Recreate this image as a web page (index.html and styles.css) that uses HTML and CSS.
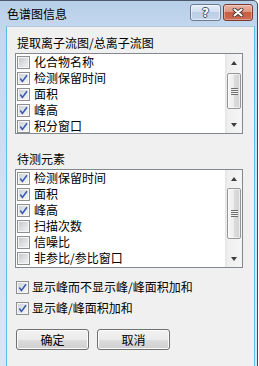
FILE: index.html
```html
<!DOCTYPE html>
<html>
<head>
    <meta charset="UTF-8">
    <meta name="viewport" content="width=device-width, initial-scale=1.0">
    <title>色谱图信息</title>
    <link rel="stylesheet" href="styles.css">
</head>
<body>
    <div class="window">
        <div class="titlebar">
            <span class="title">色谱图信息</span>
            <div class="caption-buttons">
                <span class="cap-btn help-btn"><span class="help-mark">?</span></span>
                <span class="cap-btn close-btn">
                    <svg width="12" height="9" viewBox="0 0 12 9">
                        <path d="M2.5 1.5 L9.5 7.5 M9.5 1.5 L2.5 7.5" stroke="#4a3430" stroke-width="3.8" stroke-linecap="round"/>
                        <path d="M2.5 1.5 L9.5 7.5 M9.5 1.5 L2.5 7.5" stroke="#ffffff" stroke-width="2.1" stroke-linecap="round"/>
                    </svg>
                </span>
            </div>
        </div>

        <div class="client">
            <div class="group-label">提取离子流图/总离子流图</div>
            <div class="listbox list-ion">
                <div class="list-items">
                    <div class="item"><span class="check"></span>化合物名称</div>
                    <div class="item"><span class="check checked"></span>检测保留时间</div>
                    <div class="item"><span class="check checked"></span>面积</div>
                    <div class="item"><span class="check checked"></span>峰高</div>
                    <div class="item"><span class="check checked"></span>积分窗口</div>
                </div>
                <div class="scrollbar">
                    <div class="sb-btn"><span class="arrow-up"></span></div>
                    <div class="sb-track">
                        <div class="sb-thumb" style="margin-top: 2px; height: 36px;"><span class="grip"></span></div>
                    </div>
                    <div class="sb-btn"><span class="arrow-down"></span></div>
                </div>
            </div>

            <div class="group-label second">待测元素</div>
            <div class="listbox list-elem">
                <div class="list-items">
                    <div class="item"><span class="check checked"></span>检测保留时间</div>
                    <div class="item"><span class="check checked"></span>面积</div>
                    <div class="item"><span class="check checked"></span>峰高</div>
                    <div class="item"><span class="check"></span>扫描次数</div>
                    <div class="item"><span class="check"></span>信噪比</div>
                    <div class="item"><span class="check"></span>非参比/参比窗口</div>
                </div>
                <div class="scrollbar">
                    <div class="sb-btn"><span class="arrow-up"></span></div>
                    <div class="sb-track">
                        <div class="sb-thumb" style="margin-top: 1px; height: 51px;"><span class="grip"></span></div>
                    </div>
                    <div class="sb-btn"><span class="arrow-down"></span></div>
                </div>
            </div>

            <label class="option first"><span class="check checked"></span>显示峰而不显示峰/峰面积加和</label>
            <label class="option"><span class="check checked"></span>显示峰/峰面积加和</label>

            <div class="button-row">
                <button class="push-btn">确定</button>
                <button class="push-btn">取消</button>
            </div>
        </div>
    </div>
</body>
</html>
```

FILE: styles.css
```css
body {
    margin: 0;
    background-color: #fff;
    font-family: "Noto Sans CJK SC", "Liberation Sans", sans-serif;
    font-size: 12px;
    color: #000;
}

/* Outer frame (aero glass) */
.window {
    width: 257px;
    padding-bottom: 1px;
    border-top: 1px solid #4f5866;
    border-right: 1px solid #3e4a5a;
    border-bottom: 1px solid #3e4a5a;
    border-top-right-radius: 5px;
    background: linear-gradient(to bottom, #b8cfe9 0px, #c4d7ee 30px, #d3e1f1 200px, #dae5f2 100%);
}

.titlebar {
    height: 25px;
    display: flex;
    justify-content: space-between;
    align-items: flex-start;
    padding: 0 4px 0 7px;
}

.title {
    line-height: 25px;
}

.caption-buttons {
    display: flex;
    gap: 2px;
    margin-top: 3px;
}

.cap-btn {
    height: 17px;
    box-sizing: border-box;
    border-radius: 3px;
    display: flex;
    justify-content: center;
    align-items: center;
}

.help-btn {
    width: 31px;
    border: 1px solid #6b7c92;
    background: linear-gradient(to bottom, #e6eef8 0%, #d3dff0 45%, #bccee5 50%, #c6d6ea 100%);
    box-shadow: inset 0 0 0 1px rgba(255,255,255,0.5);
}

.help-mark {
    font-family: "DejaVu Sans", sans-serif;
    font-weight: bold;
    font-size: 12px;
    line-height: 12px;
    color: #fff;
    text-shadow: 1px 0 #42526a, -1px 0 #42526a, 0 1px #42526a, 0 -1px #42526a;
}

.close-btn {
    width: 30px;
    border: 1px solid #7a3a30;
    background: linear-gradient(to bottom, #e9b3a5 0%, #dc9784 45%, #c85c45 50%, #cf6c52 100%);
    box-shadow: inset 0 0 0 1px rgba(255,255,255,0.35);
}

/* Client area of the dialog */
.client {
    margin: 0 2px 0 6px;
    height: 335px;
    border: 1px solid #58bde8;
    border-top-color: #b3c6dc;
    background-color: #f0f0f0;
    padding: 8px 11px 0 8px;
}

.group-label {
    line-height: 16px;
    padding-left: 2px;
    margin-bottom: 2px;
}

.group-label.second {
    margin-top: 17px;
}

.listbox {
    box-sizing: border-box;
    border: 1px solid #828790;
    background-color: #fff;
    display: flex;
    overflow: hidden;
}

.list-ion {
    height: 81px;
}

.list-elem {
    height: 99px;
}

.list-items {
    flex: 1;
    overflow: hidden;
}

.item {
    height: 16px;
    line-height: 16px;
    display: flex;
    align-items: center;
    padding-left: 1px;
    white-space: nowrap;
}

.item .check {
    margin-right: 4px;
}

/* Win7 style checkbox */
.check {
    width: 13px;
    height: 13px;
    flex: none;
    box-sizing: border-box;
    border: 1px solid #8e8f8f;
    background: linear-gradient(135deg, #bfc3c8 0%, #dcdee1 50%, #f3f3f3 100%);
    box-shadow: inset 0 0 0 1px #f6f6f6;
    position: relative;
}

.check.checked {
    background: linear-gradient(135deg, #c9ccd1 0%, #e4e6e9 50%, #f7f7f7 100%);
}

.check.checked::after {
    content: "";
    position: absolute;
    left: 1px;
    top: 1px;
    width: 9px;
    height: 9px;
    background: url("data:image/svg+xml,%3Csvg xmlns='http://www.w3.org/2000/svg' width='9' height='9' viewBox='0 0 9 9'%3E%3Cpath d='M1.3 4.6 L3.4 7.4 L8 1.3' fill='none' stroke='%233a5bb0' stroke-width='1.6'/%3E%3C/svg%3E") no-repeat;
}

/* Scrollbar */
.scrollbar {
    width: 17px;
    flex: none;
    display: flex;
    flex-direction: column;
    background: linear-gradient(to right, #e4e4e4 0px, #efefef 3px, #f5f5f5 100%);
}

.sb-btn {
    height: 17px;
    flex: none;
    display: flex;
    justify-content: center;
    align-items: center;
}

.arrow-up {
    border-left: 3.5px solid transparent;
    border-right: 3.5px solid transparent;
    border-bottom: 4px solid #3d3d3d;
}

.arrow-down {
    border-left: 3.5px solid transparent;
    border-right: 3.5px solid transparent;
    border-top: 4px solid #3d3d3d;
}

.sb-track {
    flex: 1;
}

.sb-thumb {
    box-sizing: border-box;
    margin-left: 2px;
    width: 14px;
    border: 1px solid #979797;
    border-radius: 2px;
    background: linear-gradient(to right, #f6f6f6 0%, #ececec 50%, #dcdcdc 51%, #d2d2d2 100%);
    box-shadow: inset 0 0 0 1px rgba(255,255,255,0.6);
    display: flex;
    justify-content: center;
    align-items: center;
}

.grip {
    width: 7px;
    height: 7px;
    background: repeating-linear-gradient(to bottom, #6e6e6e 0px, #6e6e6e 1px, #f2f2f2 1px, #f2f2f2 2px);
}

/* Options below the lists */
.option {
    display: flex;
    align-items: center;
    height: 16px;
    line-height: 16px;
    margin-top: 5px;
    padding-left: 1px;
    white-space: nowrap;
}

.option.first {
    margin-top: 11px;
}

.option .check {
    margin-right: 3px;
}

.button-row {
    display: flex;
    gap: 8px;
    margin-top: 13px;
    padding-left: 1px;
}

.push-btn {
    width: 73px;
    height: 21px;
    padding: 0;
    border: 1px solid #707070;
    border-radius: 3px;
    background: linear-gradient(to bottom, #f2f2f2 0%, #ebebeb 50%, #dddddd 50%, #cfcfcf 100%);
    box-shadow: inset 0 0 0 1px #fbfbfb;
    font-family: "Noto Sans CJK SC", "Liberation Sans", sans-serif;
    font-size: 12px;
    color: #000;
}
```
